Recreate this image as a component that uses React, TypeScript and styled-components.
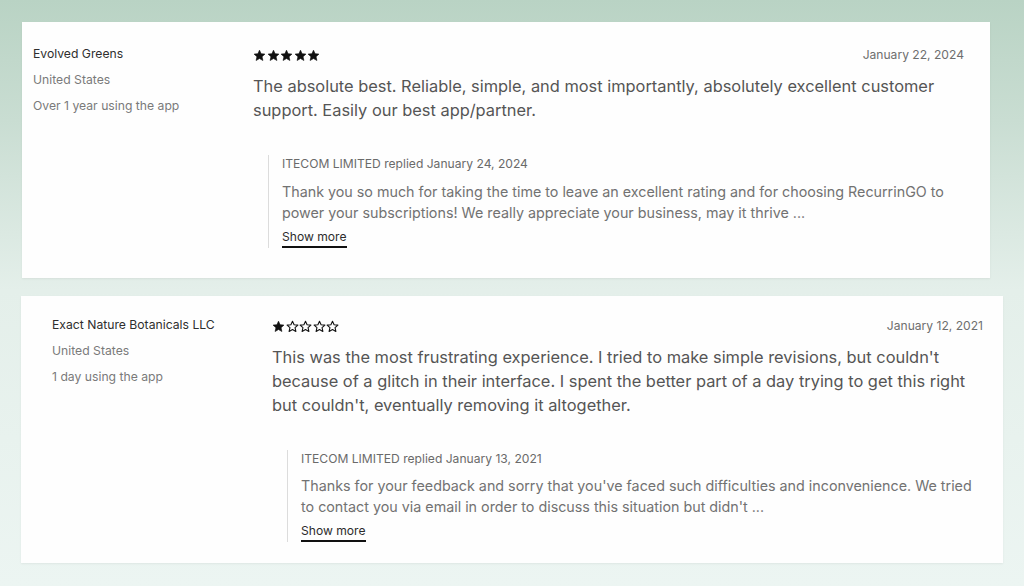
import styled, { createGlobalStyle } from 'styled-components';

const GlobalStyle = createGlobalStyle`
  html, body {
    margin: 0;
    padding: 0;
  }
  body {
    font-family: Inter, "Noto Sans", sans-serif;
    background: linear-gradient(
      180deg,
      #b9d3c4 0px,
      #c9ddd2 120px,
      #e4efea 290px,
      #ecf5f2 586px
    );
    min-height: 586px;
    overflow: hidden;
  }
`;

type Review = {
  shop: string;
  country: string;
  usage: string;
  rating: number;
  date: string;
  body: string;
  replyDate: string;
  reply: string;
  width: number;
  offset: number;
  pad: [number, number, number, number];
  replyGap: number;
};

const reviews: Review[] = [
  {
    shop: 'Evolved Greens',
    country: 'United States',
    usage: 'Over 1 year using the app',
    rating: 5,
    date: 'January 22, 2024',
    body: 'The absolute best. Reliable, simple, and most importantly, absolutely excellent customer support. Easily our best app/partner.',
    replyDate: 'January 24, 2024',
    reply:
      'Thank you so much for taking the time to leave an excellent rating and for choosing RecurrinGO to power your subscriptions! We really appreciate your business, may it thrive ...',
    width: 968,
    offset: 22,
    pad: [22, 26, 30, 11],
    replyGap: 8,
  },
  {
    shop: 'Exact Nature Botanicals LLC',
    country: 'United States',
    usage: '1 day using the app',
    rating: 1,
    date: 'January 12, 2021',
    body: "This was the most frustrating experience. I tried to make simple revisions, but couldn't because of a glitch in their interface. I spent the better part of a day trying to get this right but couldn't, eventually removing it altogether.",
    replyDate: 'January 13, 2021',
    reply:
      "Thanks for your feedback and sorry that you've faced such difficulties and inconvenience. We tried to contact you via email in order to discuss this situation but didn't ...",
    width: 982,
    offset: 21,
    pad: [19, 20, 21, 31],
    replyGap: 7,
  },
];

function Star({ filled }: { filled: boolean }) {
  return (
    <svg width="13" height="13" viewBox="0 0 24 24">
      <path
        d="M12 2.2l2.95 6.55 7.05.7-5.3 4.75 1.55 7-6.25-3.65-6.25 3.65 1.55-7L2 9.45l7.05-.7z"
        fill={filled ? '#111' : 'none'}
        stroke="#111"
        strokeWidth={filled ? 1.2 : 2}
        strokeLinejoin="round"
      />
    </svg>
  );
}

export default function App() {
  return (
    <>
      <GlobalStyle />
      <Page>
        {reviews.map((r) => (
          <Card key={r.shop} $width={r.width} $offset={r.offset} $pad={r.pad}>
            <Merchant>
              <ShopName>{r.shop}</ShopName>
              <Meta>{r.country}</Meta>
              <Meta>{r.usage}</Meta>
            </Merchant>
            <Content>
              <HeaderRow>
                <Stars>
                  {[0, 1, 2, 3, 4].map((i) => (
                    <Star key={i} filled={i < r.rating} />
                  ))}
                </Stars>
                <DateText>{r.date}</DateText>
              </HeaderRow>
              <Body>{r.body}</Body>
              <Reply>
                <ReplyHeader>ITECOM LIMITED replied {r.replyDate}</ReplyHeader>
                <ReplyBody $gap={r.replyGap}>{r.reply}</ReplyBody>
                <ShowMore>Show more</ShowMore>
              </Reply>
            </Content>
          </Card>
        ))}
      </Page>
    </>
  );
}

const Page = styled.div`
  display: flex;
  flex-direction: column;
  gap: 18px;
  padding-top: 22px;
`;

const Card = styled.div<{
  $width: number;
  $offset: number;
  $pad: [number, number, number, number];
}>`
  width: ${(p) => p.$width}px;
  margin-left: ${(p) => p.$offset}px;
  box-sizing: border-box;
  padding: ${(p) => p.$pad.map((v) => `${v}px`).join(' ')};
  background: #fefefe;
  box-shadow: 0 1px 2px rgba(0, 0, 0, 0.06);
  display: grid;
  grid-template-columns: 220px 1fr;
`;

const Merchant = styled.div`
  display: flex;
  flex-direction: column;
  gap: 6px;
`;

const ShopName = styled.div`
  font-size: 12.2px;
  line-height: 20px;
  color: #2e2e2e;
`;

const Meta = styled.div`
  font-size: 12.2px;
  line-height: 20px;
  color: #7a7a7a;
`;

const Content = styled.div`
  display: flex;
  flex-direction: column;
`;

const HeaderRow = styled.div`
  display: flex;
  justify-content: space-between;
  align-items: center;
  height: 20px;
`;

const Stars = styled.div`
  display: flex;
  gap: 0.6px;
  margin-top: 2px;
`;

const DateText = styled.div`
  font-size: 12.1px;
  color: #6e6e6e;
`;

const Body = styled.p`
  margin: 10px 0 0;
  font-size: 16.4px;
  line-height: 24px;
  color: #555;
`;

const Reply = styled.div`
  margin: 33px 0 0 15px;
  border-left: 1px solid #dcdcdc;
  padding-left: 13px;
  display: flex;
  flex-direction: column;
  align-items: flex-start;
`;

const ReplyHeader = styled.div`
  font-size: 12.1px;
  line-height: 18px;
  color: #6a6a6a;
`;

const ReplyBody = styled.p<{ $gap: number }>`
  margin: ${(p) => p.$gap}px 0 0;
  font-size: 14.3px;
  line-height: 21px;
  color: #727272;
`;

const ShowMore = styled.div`
  margin-top: 6px;
  font-size: 12.1px;
  line-height: 16px;
  color: #2c2c2c;
  padding-bottom: 1px;
  border-bottom: 2px solid #111;
`;
